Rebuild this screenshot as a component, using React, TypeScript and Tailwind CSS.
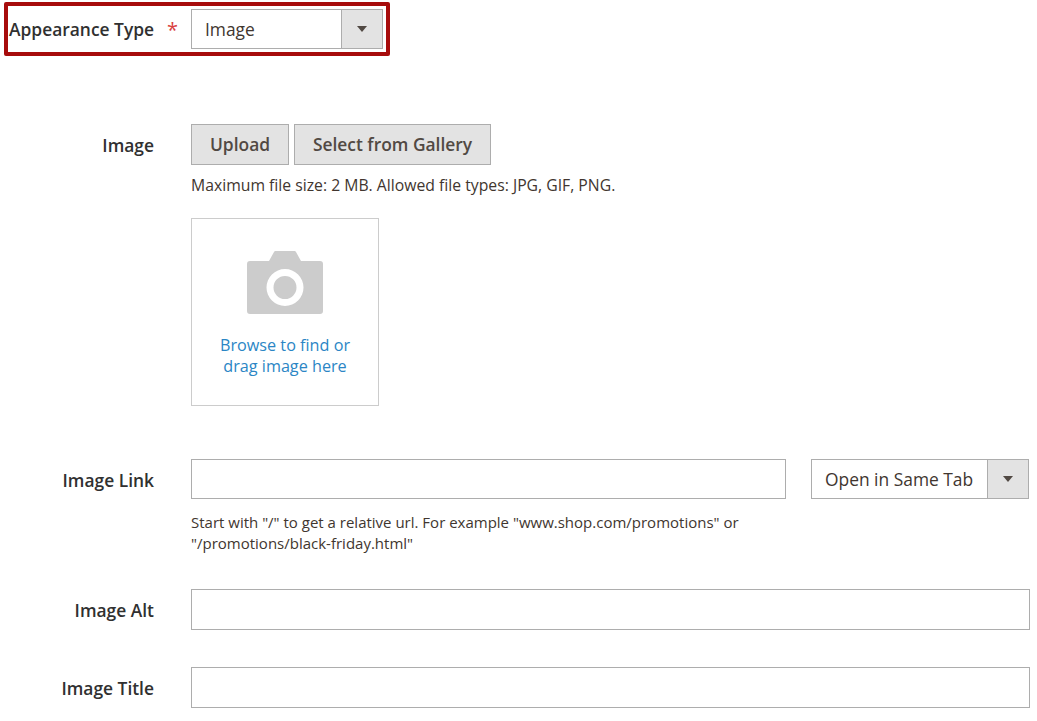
import { ReactNode } from "react";

function Caret() {
  return (
    <svg width="12" height="8" viewBox="0 0 12 8" className="block">
      <path d="M1 1h10L6 7z" fill="#514943" />
    </svg>
  );
}

function SelectBox({ value, className }: { value: string; className: string }) {
  return (
    <div className={`flex h-10 border border-[#adadad] bg-white ${className}`}>
      <div className="flex-1 flex items-center pl-[13px] text-[17.4px] text-[#41362f]">{value}</div>
      <div className="w-[41px] flex items-center justify-center bg-[#e3e3e3] border-l border-[#adadad]">
        <Caret />
      </div>
    </div>
  );
}

function Row({ label, className, children }: { label: string; className: string; children: ReactNode }) {
  return (
    <div className={`flex ${className}`}>
      <div className="w-[154px] shrink-0 pt-[7px] text-right text-[17.4px] leading-[28px] font-semibold text-[#303030]">{label}</div>
      <div className="ml-[37px] flex-1 min-w-0">{children}</div>
    </div>
  );
}

function CameraIcon() {
  return (
    <svg width="76" height="63" viewBox="0 0 76 63" className="block">
      <path
        fillRule="evenodd"
        fill="#cccccc"
        d="M3 10h19l5-9a2 2 0 0 1 2-1h18a2 2 0 0 1 2 1l5 9h19a3 3 0 0 1 3 3v47a3 3 0 0 1-3 3H3a3 3 0 0 1-3-3V13a3 3 0 0 1 3-3zM38 18a18.500 18.500 0 1 0 0 37a18.500 18.500 0 1 0 0-37zM38 25a11.500 11.500 0 1 1 0 23a11.500 11.500 0 1 1 0-23z"
      />
    </svg>
  );
}

export default function App() {
  return (
    <div className="w-[1037px] h-[721px] overflow-hidden bg-white font-['Open_Sans',sans-serif] pt-[2px]">
      {/* highlighted row */}
      <div className="ml-[4px] w-[386px] h-[54px] flex items-center border-[4px] border-[#a70c0c] rounded-[2px]">
        <span className="ml-[1px] w-[145px] text-[17.4px] font-semibold text-[#303030] whitespace-nowrap">Appearance Type</span>
        <span className="ml-[13px] pt-[2px] w-[10px] text-[20px] text-[#d94040]">*</span>
        <SelectBox value="Image" className="ml-[14px] w-[192px]" />
      </div>

      <Row label="Image" className="mt-[68px]">
        <div className="flex gap-[5px]">
          <button className="w-[98px] h-[41px] border border-[#adadad] bg-[#e3e3e3] text-[17.4px] font-semibold text-[#514943]">Upload</button>
          <button className="w-[197px] h-[41px] border border-[#adadad] bg-[#e3e3e3] text-[17.4px] font-semibold text-[#514943]">Select from Gallery</button>
        </div>
        <p className="mt-[9px] text-[15.75px] leading-[22px] text-[#41362f]">Maximum file size: 2 MB. Allowed file types: JPG, GIF, PNG.</p>
        <div className="mt-[22px] w-[188px] h-[188px] border border-[#cccccc] flex flex-col items-center pt-[32px]">
          <CameraIcon />
          <p className="mt-[21px] text-center text-[16.2px] leading-[21px] text-[#2b86c5]">
            Browse to find or<br />drag image here
          </p>
        </div>
      </Row>

      <Row label="Image Link" className="mt-[53px]">
        <div className="flex">
          <div className="w-[595px] h-10 border border-[#adadad] bg-white" />
          <SelectBox value="Open in Same Tab" className="ml-[25px] w-[218px]" />
        </div>
        <p className="mt-[13px] w-[600px] text-[15px] leading-[21px] text-[#41362f]">
          Start with "/" to get a relative url. For example "www.shop.com/promotions" or "/promotions/black-friday.html"
        </p>
      </Row>

      <Row label="Image Alt" className="mt-[35px]">
        <div className="w-[839px] h-[41px] border border-[#adadad] bg-white" />
      </Row>

      <Row label="Image Title" className="mt-[37px]">
        <div className="w-[839px] h-[41px] border border-[#adadad] bg-white" />
      </Row>
    </div>
  );
}
